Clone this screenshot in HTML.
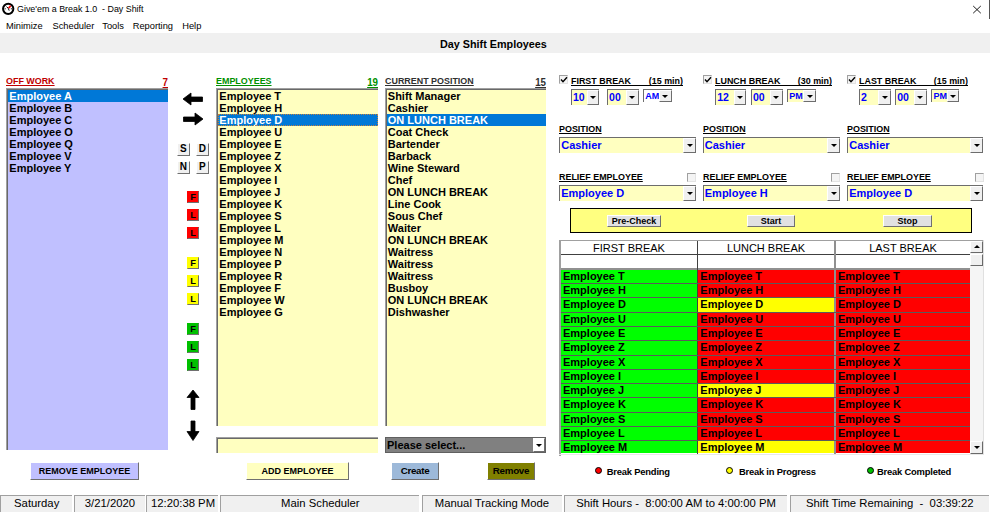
<!DOCTYPE html>
<html><head><meta charset="utf-8">
<style>
*{box-sizing:border-box;margin:0;padding:0}
html,body{width:990px;height:512px;overflow:hidden;background:#fff}
body{position:relative;font-family:"Liberation Sans",sans-serif;color:#000}
.a{position:absolute;white-space:pre;line-height:1}
.lbl{font-weight:bold;font-size:9.6px;text-decoration:underline;text-underline-offset:1px;transform:scaleX(.93);transform-origin:0 0}
.cond{transform:scaleX(.93);transform-origin:0 0}
.lblr{transform-origin:100% 0}
.lst{position:absolute;border-top:1px solid #a0a0a0;border-left:1px solid #a0a0a0}
.lst>.in{position:absolute;left:0;top:0;right:0;bottom:0;border-top:1px solid #696969;border-left:1px solid #696969}
.row{position:absolute;left:1px;right:0;height:12px;font-weight:bold;font-size:11px;line-height:12px;padding-left:1.3px;white-space:pre}
.sel{background:#0078d7;color:#fff}
.btn{position:absolute;border-top:1px solid #fff;border-left:1px solid #fff;border-right:1.5px solid #707070;border-bottom:1.5px solid #707070;font-weight:bold;text-align:center;white-space:pre}
.sbtn,.fbtn{position:absolute;width:12.5px;height:12.5px;background:#f0f0f0;border-top:1px solid #fff;border-left:1px solid #fff;border-right:1.5px solid #707070;border-bottom:1.5px solid #707070;font-weight:bold;font-size:10px;line-height:10px;text-align:center}
.fbtn{border-top-color:transparent;border-left-color:transparent;font-size:9.3px;width:12px;height:12px}
.sb{position:absolute;background:#f0f0f0;border-top:1px solid #fff;border-left:1px solid #fff;border-right:1px solid #696969;border-bottom:1px solid #696969}
.cb{position:absolute;border-top:1.3px solid #6d6d6d;border-left:1.2px solid #6d6d6d;background:#ffffc0;color:#0000ff;font-weight:bold;font-size:11px;white-space:pre;overflow:hidden}
.dd{position:absolute;top:0;right:0;bottom:0;background:#f0f0f0;border-top:1px solid #fff;border-left:1px solid #fff;border-right:1.3px solid #6d6d6d;border-bottom:1.3px solid #6d6d6d}
.dd:after{content:"";position:absolute;left:50%;top:50%;margin-left:-3px;margin-top:-1.5px;border-left:3px solid transparent;border-right:3px solid transparent;border-top:3px solid #000}
.chk{position:absolute;width:9px;height:9px;border-top:1px solid #a0a0a0;border-left:1px solid #a0a0a0;border-right:1px solid #e3e3e3;border-bottom:1px solid #e3e3e3;background:#f4f4f4}
.gr{position:absolute;height:13px;font-weight:bold;font-size:11px;line-height:13px;padding-left:2px;white-space:pre;overflow:hidden}
.G{background:#00ff00}.R{background:#ff0000}.Y{background:#ffff00}
.st{position:absolute;top:495px;height:17px;background:#f0f0f0;border-top:1px solid #a0a0a0;border-left:1px solid #a0a0a0;font-size:11.3px;line-height:15px;white-space:pre;text-align:center}
</style></head><body>
<svg class="a" style="left:0;top:0" width="17" height="17" viewBox="0 0 17 17">
<circle cx="8.2" cy="8.85" r="5.15" fill="#fff" stroke="#000" stroke-width="2"/>
<line x1="8.6" y1="8.2" x2="10.6" y2="5.9" stroke="#f00" stroke-width="1.7"/>
<path d="M6.6 6.6L8.4 8.6L9.2 10.6" fill="none" stroke="#000" stroke-width="1"/>
<path d="M4.6 8.8H5.8M10.8 8.8H12" stroke="#000" stroke-width="0.9"/>
</svg>
<div class="a" style="left:17px;top:5.4px;font-size:8.9px">Give'em a Break 1.0  - Day Shift</div>
<svg class="a" style="left:972px;top:5px" width="10" height="9" viewBox="0 0 10 9"><path d="M1.2 1L8.8 8.2M8.8 1L1.2 8.2" stroke="#111" stroke-width="0.95"/></svg>
<div class="a" style="left:989px;top:0;width:1px;height:19px;background:#555"></div>
<div class="a" style="left:6px;top:22.2px;font-size:9.3px">Minimize</div>
<div class="a" style="left:52.5px;top:22.2px;font-size:9.3px">Scheduler</div>
<div class="a" style="left:102.3px;top:22.2px;font-size:9.3px">Tools</div>
<div class="a" style="left:132.7px;top:22.2px;font-size:9.3px">Reporting</div>
<div class="a" style="left:182.2px;top:22.2px;font-size:9.3px">Help</div>
<div class="a" style="left:0;top:33px;width:990px;height:20px;background:#f0f0f0"></div>
<div class="a" style="left:440px;top:38.7px;font-size:10.8px;font-weight:bold">Day Shift Employees</div>

<div class="a lbl" style="left:6px;top:76px;color:#c00000">OFF WORK</div>
<div class="a lbl lblr" style="left:148px;top:77.2px;font-size:10.5px;color:#c00000;width:20px;text-align:right">7</div>
<div class="a lbl" style="left:216px;top:76px;color:#009000">EMPLOYEES</div>
<div class="a lbl lblr" style="left:358px;top:77.2px;font-size:10.5px;color:#009000;width:20px;text-align:right">19</div>
<div class="a lbl" style="left:384.5px;top:76px;color:#303030">CURRENT POSITION</div>
<div class="a lbl lblr" style="left:526px;top:77.2px;font-size:10.5px;color:#303030;width:20px;text-align:right">15</div>
<div class="lst" style="left:6px;top:88px;width:161.6px;height:362.3px"><div class="in" style="background:#c0c0ff"></div>
<div class="row sel" style="top:1px">Employee A</div>
<div class="row" style="top:13px">Employee B</div>
<div class="row" style="top:25px">Employee C</div>
<div class="row" style="top:37px">Employee O</div>
<div class="row" style="top:49px">Employee Q</div>
<div class="row" style="top:61px">Employee V</div>
<div class="row" style="top:73px">Employee Y</div>
</div>

<div class="lst" style="left:216px;top:88px;width:161.7px;height:338.4px"><div class="in" style="background:#ffffc0"></div>
<div class="row" style="top:1px">Employee T</div>
<div class="row" style="top:13px">Employee H</div>
<div class="row sel" style="top:25px;outline:1px dotted #c08040;outline-offset:-1px">Employee D</div>
<div class="row" style="top:37px">Employee U</div>
<div class="row" style="top:49px">Employee E</div>
<div class="row" style="top:61px">Employee Z</div>
<div class="row" style="top:73px">Employee X</div>
<div class="row" style="top:85px">Employee I</div>
<div class="row" style="top:97px">Employee J</div>
<div class="row" style="top:109px">Employee K</div>
<div class="row" style="top:121px">Employee S</div>
<div class="row" style="top:133px">Employee L</div>
<div class="row" style="top:145px">Employee M</div>
<div class="row" style="top:157px">Employee N</div>
<div class="row" style="top:169px">Employee P</div>
<div class="row" style="top:181px">Employee R</div>
<div class="row" style="top:193px">Employee F</div>
<div class="row" style="top:205px">Employee W</div>
<div class="row" style="top:217px">Employee G</div>
</div>

<div class="lst" style="left:384.5px;top:88px;width:161.3px;height:338.4px"><div class="in" style="background:#ffffc0"></div>
<div class="row" style="top:1px">Shift Manager</div>
<div class="row" style="top:13px">Cashier</div>
<div class="row sel" style="top:25px">ON LUNCH BREAK</div>
<div class="row" style="top:37px">Coat Check</div>
<div class="row" style="top:49px">Bartender</div>
<div class="row" style="top:61px">Barback</div>
<div class="row" style="top:73px">Wine Steward</div>
<div class="row" style="top:85px">Chef</div>
<div class="row" style="top:97px">ON LUNCH BREAK</div>
<div class="row" style="top:109px">Line Cook</div>
<div class="row" style="top:121px">Sous Chef</div>
<div class="row" style="top:133px">Waiter</div>
<div class="row" style="top:145px">ON LUNCH BREAK</div>
<div class="row" style="top:157px">Waitress</div>
<div class="row" style="top:169px">Waitress</div>
<div class="row" style="top:181px">Waitress</div>
<div class="row" style="top:193px">Busboy</div>
<div class="row" style="top:205px">ON LUNCH BREAK</div>
<div class="row" style="top:217px">Dishwasher</div>
</div>

<div class="lst" style="left:216px;top:437px;width:161.7px;height:16.2px"><div class="in" style="background:#ffffc0"></div></div>
<div class="a" style="left:384.5px;top:437px;width:161.3px;height:16.2px;border:1px solid #606060;background:#808080"><div class="a" style="left:1.5px;top:1.5px;font-size:11px;font-weight:bold">Please select...</div><div class="dd" style="width:12px;background:#fff"></div></div>
<svg class="a" style="left:182px;top:92px" width="22" height="14" viewBox="0 0 22 14"><path d="M1 7L9 1V5H20.5V9.5H9V13Z" fill="#000" stroke="#000" stroke-width="0.8" stroke-linejoin="round"/></svg>
<svg class="a" style="left:182px;top:112px" width="22" height="14" viewBox="0 0 22 14"><path d="M21 7L13 1V5H1.5V9.5H13V13Z" fill="#000" stroke="#000" stroke-width="0.8" stroke-linejoin="round"/></svg>
<svg class="a" style="left:186px;top:389px" width="14" height="22" viewBox="0 0 14 22"><path d="M7 1L1 8.5H5V20.5H9V8.5H13Z" fill="#000" stroke="#000" stroke-width="0.8" stroke-linejoin="round"/></svg>
<svg class="a" style="left:186px;top:420px" width="14" height="22" viewBox="0 0 14 22"><path d="M7 20.5L1 11.5H5V1H9V11.5H13Z" fill="#000" stroke="#000" stroke-width="0.8" stroke-linejoin="round"/></svg>

<div class="sbtn" style="left:177px;top:143px">S</div>
<div class="sbtn" style="left:196px;top:143px">D</div>
<div class="sbtn" style="left:177px;top:161px">N</div>
<div class="sbtn" style="left:196px;top:161px">P</div>
<div class="fbtn" style="left:187px;top:191px;background:#ff0000">F</div>
<div class="fbtn" style="left:187px;top:209px;background:#ff0000">L</div>
<div class="fbtn" style="left:187px;top:227px;background:#ff0000">L</div>
<div class="fbtn" style="left:187px;top:257px;background:#ffff00">F</div>
<div class="fbtn" style="left:187px;top:275px;background:#ffff00">L</div>
<div class="fbtn" style="left:187px;top:293px;background:#ffff00">L</div>
<div class="fbtn" style="left:187px;top:323px;background:#00c000">F</div>
<div class="fbtn" style="left:187px;top:341px;background:#00c000">L</div>
<div class="fbtn" style="left:187px;top:359px;background:#00c000">L</div>
<div class="btn" style="left:30px;top:461.5px;width:109px;height:18px;background:#c0c0ff;font-size:9px;line-height:16px">REMOVE EMPLOYEE</div>
<div class="btn" style="left:246px;top:461.5px;width:103px;height:18px;background:#ffffc0;font-size:9px;line-height:16px">ADD EMPLOYEE</div>
<div class="btn" style="left:391px;top:461.5px;width:48px;height:18px;background:#9db9d9;font-size:9.8px;line-height:16px;letter-spacing:-0.3px">Create</div>
<div class="btn" style="left:487px;top:461.5px;width:48px;height:18px;background:#808000;font-size:9.8px;line-height:16px;letter-spacing:-0.3px">Remove</div>
<div class="chk" style="left:559px;top:75px"><svg class="a" style="left:0;top:0" width="8" height="8" viewBox="0 0 8 8"><path d="M1 3.5L3 5.8L7 1.2" fill="none" stroke="#000" stroke-width="1.4"/></svg></div>
<div class="a" style="left:571px;top:85px;width:112px;height:1.2px;background:#000"></div>
<div class="a cond" style="left:571px;top:76.4px;font-size:9.6px;font-weight:bold">FIRST BREAK</div>
<div class="a cond lblr" style="left:643px;top:76.4px;width:40px;text-align:right;font-size:9.6px;font-weight:bold">(15 min)</div>
<div class="cb" style="left:571px;top:89px;width:28.3px;height:15.7px;background:#ffffc0;font-size:10.5px;line-height:14px;padding-left:1px">10<div class="dd" style="width:12.5px"></div></div>
<div class="cb" style="left:607.1px;top:89px;width:31.7px;height:15.7px;background:#ffffc0;font-size:10.5px;line-height:14px;padding-left:1px">00<div class="dd" style="width:12.8px"></div></div>
<div class="cb" style="left:643.2px;top:89px;width:28.4px;height:13.3px;background:#fff;font-size:9px;line-height:13px;padding-left:1px">AM<div class="dd" style="width:12.3px"></div></div>
<div class="a lbl" style="left:559px;top:124px;color:#000">POSITION</div>
<div class="cb" style="left:559px;top:136.6px;width:137px;height:16.2px;padding-left:1.2px;line-height:14px">Cashier<div class="dd" style="width:12.8px"></div></div>
<div class="a lbl" style="left:559px;top:172px;color:#000">RELIEF EMPLOYEE</div>
<div class="chk" style="left:687px;top:173px"></div>
<div class="cb" style="left:559px;top:184.6px;width:137px;height:16.2px;padding-left:1.2px;line-height:14px">Employee D<div class="dd" style="width:12.8px"></div></div>
<div class="chk" style="left:702.6px;top:75px"><svg class="a" style="left:0;top:0" width="8" height="8" viewBox="0 0 8 8"><path d="M1 3.5L3 5.8L7 1.2" fill="none" stroke="#000" stroke-width="1.4"/></svg></div>
<div class="a" style="left:714.6px;top:85px;width:117.39999999999998px;height:1.2px;background:#000"></div>
<div class="a cond" style="left:714.6px;top:76.4px;font-size:9.6px;font-weight:bold">LUNCH BREAK</div>
<div class="a cond lblr" style="left:792px;top:76.4px;width:40px;text-align:right;font-size:9.6px;font-weight:bold">(30 min)</div>
<div class="cb" style="left:715.2px;top:89px;width:31px;height:15.7px;background:#ffffc0;font-size:10.5px;line-height:14px;padding-left:1px">12<div class="dd" style="width:12.5px"></div></div>
<div class="cb" style="left:751px;top:89px;width:31.6px;height:15.7px;background:#ffffc0;font-size:10.5px;line-height:14px;padding-left:1px">00<div class="dd" style="width:12.8px"></div></div>
<div class="cb" style="left:787.2px;top:89px;width:28.6px;height:13.3px;background:#ffffc0;font-size:9px;line-height:13px;padding-left:1px">PM<div class="dd" style="width:12.3px"></div></div>
<div class="a lbl" style="left:702.6px;top:124px;color:#000">POSITION</div>
<div class="cb" style="left:702.6px;top:136.6px;width:137.4px;height:16.2px;padding-left:1.2px;line-height:14px">Cashier<div class="dd" style="width:12.8px"></div></div>
<div class="a lbl" style="left:702.6px;top:172px;color:#000">RELIEF EMPLOYEE</div>
<div class="chk" style="left:830.6px;top:173px"></div>
<div class="cb" style="left:702.6px;top:184.6px;width:137.4px;height:16.2px;padding-left:1.2px;line-height:14px">Employee H<div class="dd" style="width:12.8px"></div></div>
<div class="chk" style="left:847px;top:75px"><svg class="a" style="left:0;top:0" width="8" height="8" viewBox="0 0 8 8"><path d="M1 3.5L3 5.8L7 1.2" fill="none" stroke="#000" stroke-width="1.4"/></svg></div>
<div class="a" style="left:859px;top:85px;width:109px;height:1.2px;background:#000"></div>
<div class="a cond" style="left:859px;top:76.4px;font-size:9.6px;font-weight:bold">LAST BREAK</div>
<div class="a cond lblr" style="left:928px;top:76.4px;width:40px;text-align:right;font-size:9.6px;font-weight:bold">(15 min)</div>
<div class="cb" style="left:859px;top:89px;width:31.8px;height:15.7px;background:#ffffc0;font-size:10.5px;line-height:14px;padding-left:1px">2<div class="dd" style="width:12.5px"></div></div>
<div class="cb" style="left:895.2px;top:89px;width:31.4px;height:15.7px;background:#ffffc0;font-size:10.5px;line-height:14px;padding-left:1px">00<div class="dd" style="width:12.8px"></div></div>
<div class="cb" style="left:931.4px;top:89px;width:27.8px;height:13.3px;background:#ffffc0;font-size:9px;line-height:13px;padding-left:1px">PM<div class="dd" style="width:12.3px"></div></div>
<div class="a lbl" style="left:847px;top:124px;color:#000">POSITION</div>
<div class="cb" style="left:847px;top:136.6px;width:136px;height:16.2px;padding-left:1.2px;line-height:14px">Cashier<div class="dd" style="width:12.8px"></div></div>
<div class="a lbl" style="left:847px;top:172px;color:#000">RELIEF EMPLOYEE</div>
<div class="chk" style="left:975px;top:173px"></div>
<div class="cb" style="left:847px;top:184.6px;width:136px;height:16.2px;padding-left:1.2px;line-height:14px">Employee D<div class="dd" style="width:12.8px"></div></div>
<div class="a" style="left:570px;top:208px;width:402px;height:25px;background:#ffff80;border:1.5px solid #000"></div>
<div class="btn" style="left:607px;top:215px;width:54px;height:12px;background:#e1e1e1;font-size:9px;line-height:10px">Pre-Check</div>
<div class="btn" style="left:747px;top:215px;width:48px;height:12px;background:#e1e1e1;font-size:9px;line-height:10px">Start</div>
<div class="btn" style="left:883px;top:215px;width:49px;height:12px;background:#e1e1e1;font-size:9px;line-height:10px">Stop</div>
<div class="a" style="left:559px;top:239.5px;width:424.5px;height:216px;background:#fff;border-top:1.5px solid #a0a0a0;border-left:2px solid #a0a0a0"></div>
<div class="a" style="left:561px;top:241px;width:409px;height:13px;background:#fff"></div>
<div class="a" style="left:561px;top:254px;width:409px;height:1px;background:#404040"></div>
<div class="a" style="left:561px;top:268px;width:409px;height:1.7px;background:#909090"></div>
<div class="a" style="left:697px;top:241px;width:1.3px;height:214px;background:#404040"></div>
<div class="a" style="left:834px;top:241px;width:2px;height:214px;background:#909090"></div>
<div class="a" style="left:561px;top:242.5px;width:136px;text-align:center;font-size:11px">FIRST BREAK</div>
<div class="a" style="left:698px;top:242.5px;width:136px;text-align:center;font-size:11px">LUNCH BREAK</div>
<div class="a" style="left:836px;top:242.5px;width:134px;text-align:center;font-size:11px">LAST BREAK</div>
<div class="gr G" style="left:561px;top:270px;width:136px;height:13px">Employee T</div>
<div class="gr R" style="left:698.3px;top:270px;width:135.7px;height:13px">Employee T</div>
<div class="gr R" style="left:836px;top:270px;width:134.3px;height:13px">Employee T</div>
<div class="a" style="left:561px;top:283px;width:409px;height:1px;background:#5a5a5a"></div>
<div class="gr G" style="left:561px;top:284px;width:136px;height:13px">Employee H</div>
<div class="gr R" style="left:698.3px;top:284px;width:135.7px;height:13px">Employee H</div>
<div class="gr R" style="left:836px;top:284px;width:134.3px;height:13px">Employee H</div>
<div class="a" style="left:561px;top:297px;width:409px;height:1px;background:#5a5a5a"></div>
<div class="gr G" style="left:561px;top:298px;width:136px;height:14px">Employee D</div>
<div class="gr Y" style="left:698.3px;top:298px;width:135.7px;height:14px">Employee D</div>
<div class="gr R" style="left:836px;top:298px;width:134.3px;height:14px">Employee D</div>
<div class="a" style="left:561px;top:312px;width:409px;height:1px;background:#5a5a5a"></div>
<div class="gr G" style="left:561px;top:313px;width:136px;height:13px">Employee U</div>
<div class="gr R" style="left:698.3px;top:313px;width:135.7px;height:13px">Employee U</div>
<div class="gr R" style="left:836px;top:313px;width:134.3px;height:13px">Employee U</div>
<div class="a" style="left:561px;top:326px;width:409px;height:1px;background:#5a5a5a"></div>
<div class="gr G" style="left:561px;top:327px;width:136px;height:13px">Employee E</div>
<div class="gr R" style="left:698.3px;top:327px;width:135.7px;height:13px">Employee E</div>
<div class="gr R" style="left:836px;top:327px;width:134.3px;height:13px">Employee E</div>
<div class="a" style="left:561px;top:340px;width:409px;height:1px;background:#5a5a5a"></div>
<div class="gr G" style="left:561px;top:341px;width:136px;height:14px">Employee Z</div>
<div class="gr R" style="left:698.3px;top:341px;width:135.7px;height:14px">Employee Z</div>
<div class="gr R" style="left:836px;top:341px;width:134.3px;height:14px">Employee Z</div>
<div class="a" style="left:561px;top:355px;width:409px;height:1px;background:#5a5a5a"></div>
<div class="gr G" style="left:561px;top:356px;width:136px;height:13px">Employee X</div>
<div class="gr R" style="left:698.3px;top:356px;width:135.7px;height:13px">Employee X</div>
<div class="gr R" style="left:836px;top:356px;width:134.3px;height:13px">Employee X</div>
<div class="a" style="left:561px;top:369px;width:409px;height:1px;background:#5a5a5a"></div>
<div class="gr G" style="left:561px;top:370px;width:136px;height:13px">Employee I</div>
<div class="gr R" style="left:698.3px;top:370px;width:135.7px;height:13px">Employee I</div>
<div class="gr R" style="left:836px;top:370px;width:134.3px;height:13px">Employee I</div>
<div class="a" style="left:561px;top:383px;width:409px;height:1px;background:#5a5a5a"></div>
<div class="gr G" style="left:561px;top:384px;width:136px;height:13px">Employee J</div>
<div class="gr Y" style="left:698.3px;top:384px;width:135.7px;height:13px">Employee J</div>
<div class="gr R" style="left:836px;top:384px;width:134.3px;height:13px">Employee J</div>
<div class="a" style="left:561px;top:397px;width:409px;height:1px;background:#5a5a5a"></div>
<div class="gr G" style="left:561px;top:398px;width:136px;height:14px">Employee K</div>
<div class="gr R" style="left:698.3px;top:398px;width:135.7px;height:14px">Employee K</div>
<div class="gr R" style="left:836px;top:398px;width:134.3px;height:14px">Employee K</div>
<div class="a" style="left:561px;top:412px;width:409px;height:1px;background:#5a5a5a"></div>
<div class="gr G" style="left:561px;top:413px;width:136px;height:13px">Employee S</div>
<div class="gr R" style="left:698.3px;top:413px;width:135.7px;height:13px">Employee S</div>
<div class="gr R" style="left:836px;top:413px;width:134.3px;height:13px">Employee S</div>
<div class="a" style="left:561px;top:426px;width:409px;height:1px;background:#5a5a5a"></div>
<div class="gr G" style="left:561px;top:427px;width:136px;height:13px">Employee L</div>
<div class="gr R" style="left:698.3px;top:427px;width:135.7px;height:13px">Employee L</div>
<div class="gr R" style="left:836px;top:427px;width:134.3px;height:13px">Employee L</div>
<div class="a" style="left:561px;top:440px;width:409px;height:1px;background:#5a5a5a"></div>
<div class="gr G" style="left:561px;top:441px;width:136px;height:12px">Employee M</div>
<div class="gr Y" style="left:698.3px;top:441px;width:135.7px;height:12px">Employee M</div>
<div class="gr R" style="left:836px;top:441px;width:134.3px;height:12px">Employee M</div>
<div class="a" style="left:970.3px;top:241px;width:13px;height:213px;background:#f5f5f5"></div>
<div class="a" style="left:983px;top:240px;width:1px;height:215px;background:#e0e0e0"></div>
<div class="a" style="left:559px;top:454px;width:425px;height:1px;background:#e8e8e8"></div>
<div class="sb" style="left:970.3px;top:241px;width:12.5px;height:12px"></div>
<div class="a" style="left:973.5px;top:245px;border-left:3px solid transparent;border-right:3px solid transparent;border-bottom:3px solid #000"></div>
<div class="sb" style="left:970.3px;top:254px;width:12.5px;height:12px"></div>
<div class="sb" style="left:970.3px;top:440.5px;width:12.5px;height:13px"></div>
<div class="a" style="left:973.5px;top:446px;border-left:3px solid transparent;border-right:3px solid transparent;border-top:3px solid #000"></div>
<div class="a" style="left:594.7px;top:467.3px;width:7px;height:7px;border-radius:50%;background:#ff0000;border:1px solid #000"></div>
<div class="a" style="left:606.8px;top:467.3px;font-size:9.4px;font-weight:bold;letter-spacing:-0.2px">Break Pending</div>
<div class="a" style="left:726.4px;top:467.3px;width:7px;height:7px;border-radius:50%;background:#ffff00;border:1px solid #000"></div>
<div class="a" style="left:738.9px;top:467.3px;font-size:9.4px;font-weight:bold;letter-spacing:-0.2px">Break in Progress</div>
<div class="a" style="left:867.4px;top:467.3px;width:7px;height:7px;border-radius:50%;background:#00c000;border:1px solid #000"></div>
<div class="a" style="left:877px;top:467.3px;font-size:9.4px;font-weight:bold;letter-spacing:-0.2px">Break Completed</div>
<div class="st" style="left:0px;width:72.4px;text-align:center;">Saturday</div>
<div class="st" style="left:74.2px;width:70.5px;text-align:center;">3/21/2020</div>
<div class="st" style="left:146px;width:72.0px;text-align:left;padding-left:4px;">12:20:38 PM</div>
<div class="st" style="left:220.3px;width:199.1px;text-align:center;">Main Scheduler</div>
<div class="st" style="left:421.5px;width:140.0px;text-align:center;">Manual Tracking Mode</div>
<div class="st" style="left:564px;width:223.0px;text-align:center;">Shift Hours -  8:00:00 AM to 4:00:00 PM</div>
<div class="st" style="left:790px;width:198.5px;text-align:center;">Shift Time Remaining  -  03:39:22</div>
</body></html>
